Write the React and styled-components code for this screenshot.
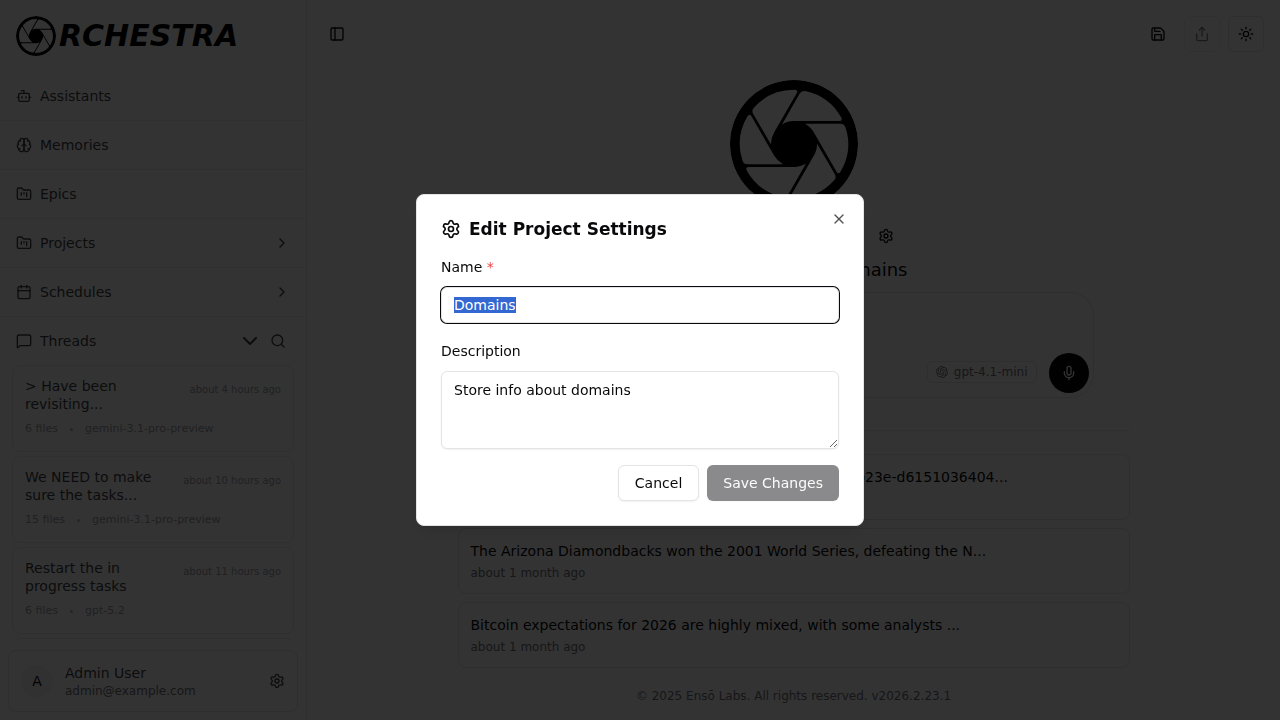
import React, { useEffect, useId, useRef } from "react";
import styled, { createGlobalStyle } from "styled-components";
import {
  Bot, FolderKanban, Calendar, MessageSquare, ChevronRight, ChevronDown,
  Search, Settings, PanelLeft, Save, Share, Sun, Mic, X,
} from "lucide-react";
import { SiOpenai } from "react-icons/si";

const GlobalStyle = createGlobalStyle`
  *, *::before, *::after { box-sizing: border-box; }
  body {
    margin: 0;
    background: #fff;
    color: #09090b;
    font-family: "DejaVu Sans", sans-serif;
    font-size: 14px;
    line-height: 20px;
  }
  button, input, textarea { font: inherit; color: inherit; }
  button { cursor: pointer; }
  h1, h2, h3, p, ul { margin: 0; padding: 0; font-weight: 400; }
  ul { list-style: none; }
  svg { display: block; flex: none; }
`;

const Page = styled.div`
  display: flex;
  height: 100vh;
  overflow: hidden;
`;

/* Sidebar */
const Sidebar = styled.aside`
  display: flex;
  flex-direction: column;
  flex: none;
  width: 307px;
  border-right: 1px solid #e4e4e7;
  color: #3f3f46;
`;

const Brand = styled.div`
  display: flex;
  align-items: center;
  gap: 3px;
  padding: 16px;
  color: #000;
  font-size: 30px;
  line-height: 40px;
  font-weight: 700;
  font-style: italic;
`;

const NavRow = styled.div`
  display: flex;
  align-items: center;
  gap: 8px;
  height: ${(p) => (p.$last ? 48 : 49)}px;
  padding: 0 ${(p) => (p.$last ? 20 : 16)}px 0 16px;
  border-bottom: ${(p) => (p.$last ? "0" : "1px solid #ebebee")};
`;

const NavLink = styled.a`
  display: flex;
  align-items: center;
  flex: 1;
  gap: 8px;
  color: inherit;
  text-decoration: none;
`;

const BareButton = styled.button`
  display: flex;
  padding: 0;
  border: 0;
  background: none;
`;

const ThreadList = styled.ul`
  display: flex;
  flex-direction: column;
  flex: 1;
  gap: 4px;
  min-height: 0;
  padding: 0 12px;
  overflow: hidden;
`;

const ThreadCard = styled.li`
  flex: none;
  height: 87px;
  padding: 11px 12px;
  border: 1px solid #ebebee;
  border-radius: 8px;
`;

const ThreadHead = styled.div`
  display: flex;
  justify-content: space-between;
  gap: 24px;
`;

const ThreadTitle = styled.h3`
  flex: 1;
  font-size: 14px;
  line-height: 18px;
`;

const ThreadTime = styled.span`
  font-size: 10px;
  line-height: 26px;
  white-space: nowrap;
  color: #a1a1aa;
`;

const ThreadMeta = styled.p`
  display: flex;
  align-items: center;
  gap: 12px;
  margin-top: 8px;
  font-size: 11px;
  line-height: 16px;
  color: #a1a1aa;
`;

const Dot = styled.span`
  width: 3px;
  height: 3px;
  border-radius: 50%;
  background: #b8b8c0;
`;

const UserCard = styled.div`
  display: flex;
  align-items: center;
  gap: 12px;
  height: 62px;
  margin: 8px;
  padding: 0 12px;
  border: 1px solid #e4e4e7;
  border-radius: 8px;
`;

const Avatar = styled.span`
  display: flex;
  align-items: center;
  justify-content: center;
  width: 32px;
  height: 32px;
  border-radius: 50%;
  background: #f4f4f5;
  color: #09090b;
`;

const UserText = styled.div`
  flex: 1;
`;

const UserMail = styled.p`
  font-size: 12px;
  line-height: 16px;
  color: #71717a;
`;

/* Main column */
const Main = styled.main`
  display: flex;
  flex-direction: column;
  flex: 1;
  min-width: 0;
`;

const TopBar = styled.header`
  display: flex;
  justify-content: space-between;
  align-items: center;
  padding: 16px;
`;

const Actions = styled.div`
  display: flex;
  gap: 8px;
`;

const IconButton = styled.button`
  display: flex;
  align-items: center;
  justify-content: center;
  width: ${(p) => p.$size || 36}px;
  height: ${(p) => p.$size || 36}px;
  padding: 0;
  border: ${(p) => (p.$outline ? "1px solid #e4e4e7" : "0")};
  border-radius: 6px;
  background: none;
  &:disabled { opacity: 0.5; }
`;

const Hero = styled.section`
  display: flex;
  flex-direction: column;
  align-items: center;
  padding-top: 12px;
`;

const ProjectHead = styled.div`
  display: flex;
  flex-direction: column;
  align-items: flex-end;
  width: 228px;
  margin-top: 20px;
`;

const ProjectSettings = styled.div`
  padding-right: 14px;
`;

const ProjectName = styled.h1`
  margin-top: 12px;
  font-size: 18px;
  line-height: 28px;
`;

const Composer = styled.div`
  display: flex;
  align-items: flex-end;
  justify-content: flex-end;
  gap: 12px;
  width: 100%;
  max-width: 600px;
  height: 106px;
  margin-top: 8px;
  padding: 4px;
  border: 1px solid #e4e4e7;
  border-radius: 24px;
`;

const ModelBadge = styled.button`
  display: flex;
  align-items: center;
  gap: 6px;
  margin-bottom: 10px;
  padding: 2px 8px;
  border: 1px solid #e4e4e7;
  border-radius: 6px;
  background: none;
  font-size: 12px;
  line-height: 16px;
  color: #71717a;
`;

const MicButton = styled.button`
  display: flex;
  align-items: center;
  justify-content: center;
  width: 40px;
  height: 40px;
  padding: 0;
  border: 0;
  border-radius: 50%;
  background: #09090b;
  color: #fafafa;
`;

const History = styled.ul`
  display: flex;
  flex-direction: column;
  gap: 8px;
  width: 100%;
  max-width: 672px;
  margin-top: 32px;
  padding-top: 23px;
  border-top: 1px solid #e4e4e7;
`;

const HistoryCard = styled.li`
  padding: 12px;
  border: 1px solid #e4e4e7;
  border-radius: 8px;
`;

const HistoryTime = styled.p`
  margin-top: 4px;
  font-size: 12px;
  line-height: 16px;
  color: #71717a;
`;

const Footer = styled.footer`
  margin-top: auto;
  padding: 16px;
  font-size: 12px;
  line-height: 16px;
  text-align: center;
  color: #71717a;
`;

/* Dialog */
const Overlay = styled.div`
  position: fixed;
  inset: 0;
  display: flex;
  align-items: center;
  justify-content: center;
  background: rgba(0, 0, 0, 0.8);
`;

const Dialog = styled.div`
  position: relative;
  width: 100%;
  max-width: 448px;
  padding: 24px;
  border: 1px solid #e4e4e7;
  border-radius: 8px;
  background: #fff;
  box-shadow: 0 10px 15px -3px rgba(0, 0, 0, 0.1), 0 4px 6px -4px rgba(0, 0, 0, 0.1);
`;

const CloseButton = styled(BareButton)`
  position: absolute;
  top: 16px;
  right: 16px;
  opacity: 0.7;
`;

const DialogTitle = styled.h2`
  display: flex;
  align-items: center;
  gap: 8px;
  font-size: 17px;
  line-height: 20px;
  font-weight: 700;
`;

const Form = styled.form`
  display: flex;
  flex-direction: column;
  gap: 16px;
  margin-top: 16px;
`;

const Field = styled.div`
  display: flex;
  flex-direction: column;
  gap: 8px;
`;

const Label = styled.label`
  line-height: 24px;
`;

const Required = styled.span`
  color: #ef4444;
`;

const TextInput = styled.input`
  width: 100%;
  height: 36px;
  padding: 4px 12px;
  border: 1px solid #e4e4e7;
  border-radius: 6px;
  outline: none;
  background: #fff;
  line-height: 16px;
  box-shadow: 0 1px 2px rgba(0, 0, 0, 0.05);
  &:focus { box-shadow: 0 0 0 1px #09090b; }
  &::selection { background: #3367d1; color: #fff; }
`;

const TextArea = styled.textarea`
  display: block;
  width: 100%;
  padding: 8px 12px;
  border: 1px solid #e4e4e7;
  border-radius: 6px;
  outline: none;
  background: #fff;
  resize: vertical;
  box-shadow: 0 1px 2px rgba(0, 0, 0, 0.05);
`;

const Buttons = styled.div`
  display: flex;
  justify-content: flex-end;
  gap: 8px;
`;

const Button = styled.button`
  height: 36px;
  padding: 0 16px;
  border: ${(p) => (p.$primary ? "0" : "1px solid #e4e4e7")};
  border-radius: 6px;
  background: ${(p) => (p.$primary ? "#18181b" : "#fff")};
  color: ${(p) => (p.$primary ? "#fafafa" : "#09090b")};
  box-shadow: 0 1px 2px rgba(0, 0, 0, 0.05);
  &:disabled { opacity: 0.5; }
`;

/* Camera-shutter logo: a disc with six blade openings cut out of it */
function Aperture({ size }) {
  const id = useId();
  return (
    <svg width={size} height={size} viewBox="-64 -64 128 128" aria-hidden="true">
      <mask id={id} maskUnits="userSpaceOnUse" x="-64" y="-64" width="128" height="128">
        <circle r="64" fill="#fff" />
        {[0, 60, 120, 180, 240, 300].map((a) => (
          <path
            key={a}
            transform={`rotate(${a})`}
            fill="#000"
            d="M-12-19.6A23 23 0 0 1 0-23H45.5Q48.8-23 47.3-26.4A54 54 0 0 0 11-53Q7.5-53.5 5.7-50.5Z"
          />
        ))}
      </mask>
      <circle r="64" fill="#000" mask={`url(#${id})`} />
    </svg>
  );
}

function Brain({ size }) {
  return (
    <svg
      width={size} height={size} viewBox="0 0 24 24" fill="none" stroke="currentColor"
      strokeWidth="2" strokeLinecap="round" strokeLinejoin="round" aria-hidden="true"
    >
      <path d="M12 5a3 3 0 1 0-5.997.125 4 4 0 0 0-2.526 5.77 4 4 0 0 0 .556 6.588A4 4 0 1 0 12 18Z" />
      <path d="M12 5a3 3 0 1 1 5.997.125 4 4 0 0 1 2.526 5.77 4 4 0 0 1-.556 6.588A4 4 0 1 1 12 18Z" />
      <path d="M15 13a4.5 4.5 0 0 1-3-4 4.5 4.5 0 0 1-3 4" />
      <path d="M17.599 6.5a3 3 0 0 0 .399-1.375" />
      <path d="M6.003 5.125A3 3 0 0 0 6.401 6.5" />
      <path d="M3.477 10.896a4 4 0 0 1 .585-.396" />
      <path d="M19.938 10.5a4 4 0 0 1 .585.396" />
      <path d="M6 18a4 4 0 0 1-1.967-.516" />
      <path d="M19.967 17.484A4 4 0 0 1 18 18" />
    </svg>
  );
}

const NAV = [
  { label: "Assistants", Icon: Bot },
  { label: "Memories", Icon: Brain },
  { label: "Epics", Icon: FolderKanban },
  { label: "Projects", Icon: FolderKanban, expandable: true },
  { label: "Schedules", Icon: Calendar, expandable: true },
];

const THREADS = [
  { title: "> Have been revisiting...", time: "about 4 hours ago", files: "6 files", model: "gemini-3.1-pro-preview" },
  { title: "We NEED to make sure the tasks...", time: "about 10 hours ago", files: "15 files", model: "gemini-3.1-pro-preview" },
  { title: "Restart the in progress tasks", time: "about 11 hours ago", files: "6 files", model: "gpt-5.2" },
  { title: "", time: "", files: "", model: "" },
];

const HISTORY = [
  "Domain information stored as id: 5f0c7a92-41de-4c08-b23e-d6151036404...",
  "The Arizona Diamondbacks won the 2001 World Series, defeating the N...",
  "Bitcoin expectations for 2026 are highly mixed, with some analysts ...",
];

export default function App() {
  const nameRef = useRef(null);
  useEffect(() => {
    nameRef.current.focus();
    nameRef.current.select();
  }, []);

  return (
    <>
      <GlobalStyle />
      <Page>
        <Sidebar>
          <Brand><Aperture size={40} />RCHESTRA</Brand>
          <nav>
            {NAV.map(({ label, Icon, expandable }) => (
              <NavRow key={label}>
                <NavLink href="#"><Icon size={16} />{label}</NavLink>
                {expandable && <ChevronRight size={16} />}
              </NavRow>
            ))}
            <NavRow $last>
              <NavLink href="#"><MessageSquare size={16} />Threads</NavLink>
              <BareButton aria-label="Collapse threads"><ChevronDown size={24} /></BareButton>
              <BareButton aria-label="Search threads"><Search size={16} /></BareButton>
            </NavRow>
          </nav>
          <ThreadList>
            {THREADS.map((t, i) => (
              <ThreadCard key={i}>
                {t.title && (
                  <>
                    <ThreadHead>
                      <ThreadTitle>{t.title}</ThreadTitle>
                      <ThreadTime>{t.time}</ThreadTime>
                    </ThreadHead>
                    <ThreadMeta>{t.files}<Dot />{t.model}</ThreadMeta>
                  </>
                )}
              </ThreadCard>
            ))}
          </ThreadList>
          <UserCard>
            <Avatar>A</Avatar>
            <UserText>
              <p>Admin User</p>
              <UserMail>admin@example.com</UserMail>
            </UserText>
            <BareButton aria-label="Account settings"><Settings size={16} /></BareButton>
          </UserCard>
        </Sidebar>

        <Main>
          <TopBar>
            <IconButton $size={28} aria-label="Toggle sidebar"><PanelLeft size={16} /></IconButton>
            <Actions>
              <IconButton aria-label="Save"><Save size={16} /></IconButton>
              <IconButton $outline disabled aria-label="Share"><Share size={16} /></IconButton>
              <IconButton $outline aria-label="Theme"><Sun size={16} /></IconButton>
            </Actions>
          </TopBar>
          <Hero>
            <Aperture size={128} />
            <ProjectHead>
              <ProjectSettings>
                <BareButton aria-label="Project settings"><Settings size={16} /></BareButton>
              </ProjectSettings>
              <ProjectName>Domains</ProjectName>
            </ProjectHead>
            <Composer>
              <ModelBadge><SiOpenai size={12} />gpt-4.1-mini</ModelBadge>
              <MicButton aria-label="Dictate"><Mic size={16} /></MicButton>
            </Composer>
            <History>
              {HISTORY.map((text) => (
                <HistoryCard key={text}>
                  <p>{text}</p>
                  <HistoryTime>about 1 month ago</HistoryTime>
                </HistoryCard>
              ))}
            </History>
          </Hero>
          <Footer>© 2025 Ensō Labs. All rights reserved. v2026.2.23.1</Footer>
        </Main>
      </Page>

      <Overlay>
        <Dialog role="dialog" aria-modal="true" aria-labelledby="dialog-title">
          <DialogTitle id="dialog-title"><Settings size={20} />Edit Project Settings</DialogTitle>
          <Form onSubmit={(e) => e.preventDefault()}>
            <Field>
              <Label htmlFor="project-name">Name <Required>*</Required></Label>
              <TextInput id="project-name" ref={nameRef} defaultValue="Domains" />
            </Field>
            <Field>
              <Label htmlFor="project-description">Description</Label>
              <TextArea id="project-description" rows={3} defaultValue="Store info about domains" />
            </Field>
            <Buttons>
              <Button type="button">Cancel</Button>
              <Button type="submit" $primary disabled>Save Changes</Button>
            </Buttons>
          </Form>
          <CloseButton aria-label="Close"><X size={16} /></CloseButton>
        </Dialog>
      </Overlay>
    </>
  );
}
